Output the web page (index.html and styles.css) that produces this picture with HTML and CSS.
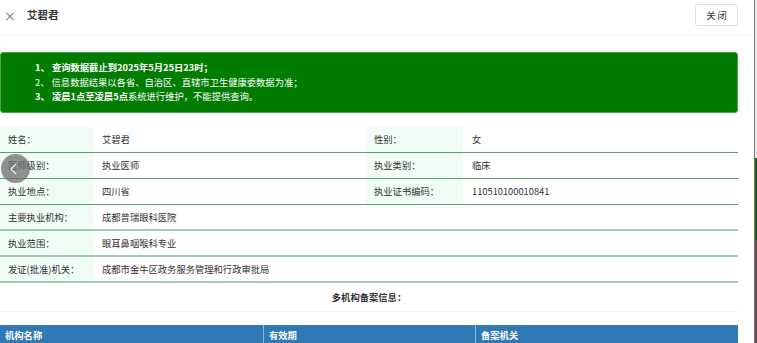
FILE: index.html
```html
<!DOCTYPE html>
<html lang="zh-CN">
<head>
  <meta charset="UTF-8">
  <meta name="viewport" content="width=device-width, initial-scale=1.0">
  <title>艾碧君</title>
  <link rel="stylesheet" href="styles.css">
</head>
<body>

  <div class="modal">
    <div class="head">
      <span class="x">×</span>
      <span class="title">艾碧君</span>
      <button class="close">关 闭</button>
    </div>

    <div class="content">
      <div class="notice">
        <div class="strong">1、 查询数据截止到2025年5月25日23时；</div>
        <div>2、 信息数据结果以各省、自治区、直辖市卫生健康委数据为准；</div>
        <div><b>3、 凌晨1点至凌晨5点</b>系统进行维护，不能提供查询。</div>
      </div>

      <div class="info">
        <div class="row">
          <div class="lbl">姓名：</div><div class="val">艾碧君</div>
          <div class="lbl">性别：</div><div class="val">女</div>
        </div>
        <div class="row">
          <div class="lbl">医师级别：</div><div class="val">执业医师</div>
          <div class="lbl">执业类别：</div><div class="val">临床</div>
        </div>
        <div class="row">
          <div class="lbl">执业地点：</div><div class="val">四川省</div>
          <div class="lbl">执业证书编码：</div><div class="val">110510100010841</div>
        </div>
        <div class="row wide">
          <div class="lbl">主要执业机构：</div><div class="val">成都普瑞眼科医院</div>
        </div>
        <div class="row wide">
          <div class="lbl">执业范围：</div><div class="val">眼耳鼻咽喉科专业</div>
        </div>
        <div class="row wide">
          <div class="lbl">发证(批准)机关：</div><div class="val">成都市金牛区政务服务管理和行政审批局</div>
        </div>
      </div>

      <div class="sub">多机构备案信息：</div>

      <div class="orgs">
        <div class="th first">机构名称</div>
        <div class="th">有效期</div>
        <div class="th">备案机关</div>
      </div>
    </div>

    <div class="back">
      <svg width="10" height="12" viewBox="0 0 10 12"><polyline points="7,1 2,6 7,11" fill="none" stroke="#eee" stroke-width="1.2"/></svg>
    </div>
  </div>

  <div class="strip">
    <div class="s1"></div>
    <div class="s2"></div>
    <div class="s3"></div>
  </div>

</body>
</html>
```

FILE: styles.css
```css
:root {
  --green: #007c00;
  --mint: #f0fcf6;
  --line: #55a079;
  --line-light: #a2ccb5;
  --blue: #3179b5;
}

html, body {
  margin: 0;
  height: 100%;
}

body {
  display: flex;
  overflow: hidden;
  font-family: "Noto Sans CJK SC", "Liberation Sans", sans-serif;
  font-size: 9.3px;
  color: #333;
  background: #fff;
}

.modal {
  position: relative;
  width: 754px;
  height: 343px;
  overflow: hidden;
  background: #fff;
  border-right: 1px solid #777;
}

.head {
  height: 35px;
  border-bottom: 1px solid #f0f0f0;
  display: flex;
  align-items: center;
  padding: 0 16px 0 4px;
}

.x {
  color: #888;
  font-size: 14px;
  font-family: "DejaVu Sans", sans-serif;
  width: 23px;
  line-height: 1;
  margin-top: -4px;
}

.title {
  font-size: 10.5px;
  font-weight: bold;
  color: #333;
  margin-top: -7px;
}

.close {
  margin-left: auto;
  margin-top: -6px;
  height: 22px;
  width: 43px;
  padding: 0;
  background: #fff;
  border: 1px solid #e3e3e3;
  border-radius: 2px;
  font-family: inherit;
  font-size: 9.3px;
  color: #333;
}

.content {
  padding-right: 16px;
}

.notice {
  margin-top: 16px;
  background: var(--green);
  border: 1px solid #4aa34a;
  border-radius: 3px;
  color: #fff;
  padding: 7px 0 8px 34px;
  line-height: 14.5px;
}

.notice .strong,
.notice b {
  font-weight: bold;
}

.info {
  margin-top: 14px;
}

.row {
  display: grid;
  grid-template-columns: 93px 273px 97px 275px;
  height: 26px;
  box-sizing: border-box;
  border-bottom: 1px solid var(--line);
}

.row.wide {
  grid-template-columns: 93px 645px;
  border-bottom: 2px solid var(--line-light);
}

.lbl,
.val {
  display: flex;
  align-items: center;
}

.lbl {
  background: var(--mint);
  padding-left: 8px;
}

.val {
  padding-left: 9px;
}

.sub {
  height: 28px;
  line-height: 28px;
  text-align: center;
  font-weight: bold;
  border-bottom: 1px solid #f4f4f4;
}

.orgs {
  margin-top: 13px;
  display: grid;
  grid-template-columns: 263px 212px 263px;
  background: var(--blue);
  color: #fff;
  font-weight: bold;
}

.th {
  height: 24px;
  line-height: 21px;
  padding-left: 5px;
  border-left: 1px solid #8db3d6;
}

.th.first {
  border-left: none;
  border-top-left-radius: 5px;
}

.back {
  position: absolute;
  left: 1px;
  top: 154px;
  width: 29px;
  height: 29px;
  border-radius: 50%;
  background: rgba(110, 110, 110, 0.75);
  display: flex;
  align-items: center;
  justify-content: center;
}

.back svg {
  margin-left: -3px;
}

.strip {
  width: 2px;
  display: flex;
  flex-direction: column;
}

.s1 {
  height: 158px;
  background: #e8e8e8;
}

.s2 {
  height: 82px;
  background: #1c5a1c;
}

.s3 {
  flex: 1;
  background: #6e4a44;
}
```
